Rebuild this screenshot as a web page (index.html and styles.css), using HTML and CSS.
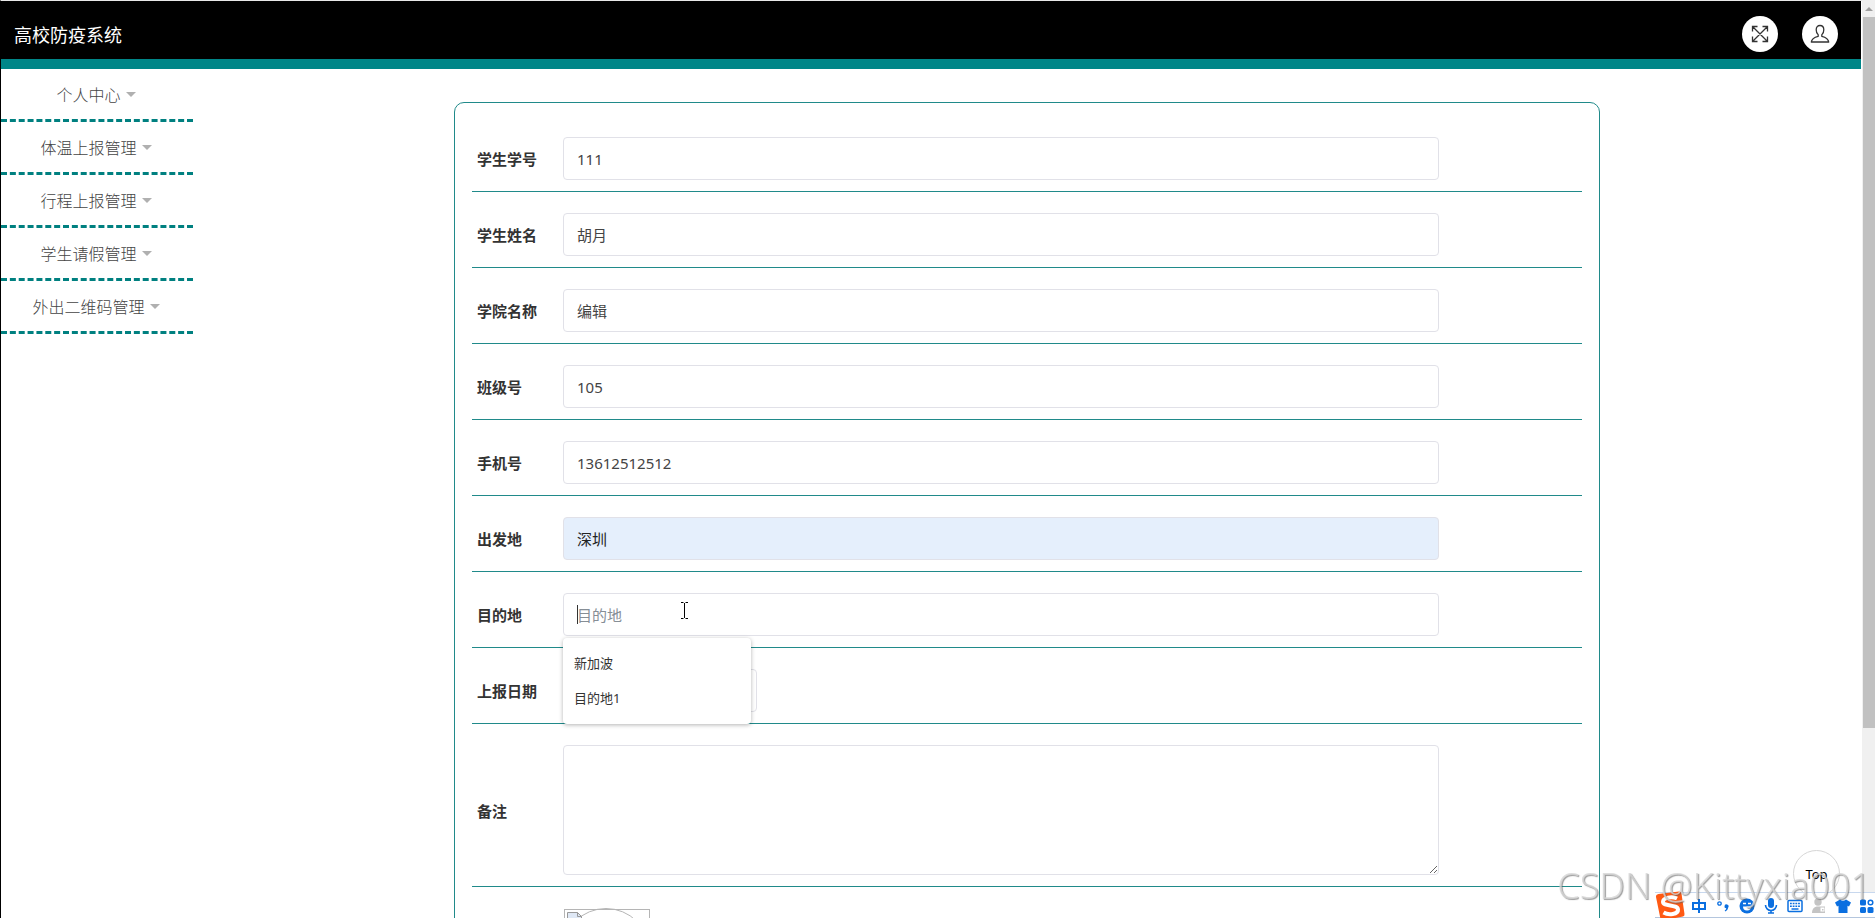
FILE: index.html
```html
<!DOCTYPE html>
<html lang="zh-CN">
<head>
    <meta charset="UTF-8">
    <meta name="viewport" content="width=device-width, initial-scale=1.0">
    <title>高校防疫系统</title>
    <link rel="stylesheet" href="styles.css">
</head>
<body>
    <div class="page">
        <header class="header">
            <h1 class="logo">高校防疫系统</h1>
            <div class="header-tools">
                <button class="round-btn" type="button" aria-label="全屏">
                    <svg width="20" height="20" viewBox="0 0 20 20" fill="none" stroke="#333" stroke-width="1.3">
                        <path d="M2.5 2.5l15 15M17.5 2.5l-15 15M2.5 7.5v-5h5M12.5 2.5h5v5M17.5 12.5v5h-5M7.5 17.5h-5v-5"/>
                    </svg>
                </button>
                <button class="round-btn" type="button" aria-label="用户">
                    <svg width="20" height="20" viewBox="0 0 20 20" fill="none" stroke="#333" stroke-width="1.3" stroke-linejoin="round">
                        <path d="M8.2 10.8C6.800 9.800 6.200 8 6.200 5.800C6.200 3.200 7.600 1.500 10 1.500S13.800 3.200 13.800 5.800C13.800 8 13.200 9.800 11.800 10.800V12.300C15.500 13.200 18.300 14.300 18.700 18H1.300C1.700 14.300 4.500 13.200 8.200 12.300Z"/>
                    </svg>
                </button>
            </div>
        </header>

        <div class="container">
            <nav class="sidebar">
                <ul class="menu">
                    <li><a class="menu-link" href="#">个人中心</a></li>
                    <li><a class="menu-link" href="#">体温上报管理</a></li>
                    <li><a class="menu-link" href="#">行程上报管理</a></li>
                    <li><a class="menu-link" href="#">学生请假管理</a></li>
                    <li><a class="menu-link" href="#">外出二维码管理</a></li>
                </ul>
            </nav>

            <main class="content">
                <form class="form-card" autocomplete="off">
                    <div class="form-row">
                        <label for="xuehao">学生学号</label>
                        <div class="field"><input class="form-control" type="text" id="xuehao" value="111"></div>
                    </div>
                    <div class="form-row">
                        <label for="xingming">学生姓名</label>
                        <div class="field"><input class="form-control" type="text" id="xingming" value="胡月"></div>
                    </div>
                    <div class="form-row">
                        <label for="xueyuan">学院名称</label>
                        <div class="field"><input class="form-control" type="text" id="xueyuan" value="编辑"></div>
                    </div>
                    <div class="form-row">
                        <label for="banji">班级号</label>
                        <div class="field"><input class="form-control" type="text" id="banji" value="105"></div>
                    </div>
                    <div class="form-row">
                        <label for="shouji">手机号</label>
                        <div class="field"><input class="form-control" type="text" id="shouji" value="13612512512"></div>
                    </div>
                    <div class="form-row">
                        <label for="chufadi">出发地</label>
                        <div class="field"><input class="form-control filled" type="text" id="chufadi" value="深圳"></div>
                    </div>
                    <div class="form-row">
                        <label for="mudidi">目的地</label>
                        <div class="field">
                            <input class="form-control" type="text" id="mudidi" placeholder="目的地">
                            <span class="caret"></span>
                            <ul class="suggest">
                                <li>新加波</li>
                                <li>目的地1</li>
                            </ul>
                        </div>
                    </div>
                    <div class="form-row">
                        <label for="riqi">上报日期</label>
                        <div class="field"><input class="form-control date" type="text" id="riqi"></div>
                    </div>
                    <div class="form-row">
                        <label for="beizhu">备注</label>
                        <div class="field"><textarea class="form-control" id="beizhu"></textarea></div>
                    </div>
                    <div class="form-row">
                        <div class="field upload">
                            <svg width="88" height="88" viewBox="0 0 88 88" fill="none" stroke="#b5b5b5">
                                <rect x="1.500" y="1.500" width="85" height="85"/>
                                <circle cx="43" cy="44" r="43.500"/>
                                <path d="M4.500 4.500h10l4 4v11h-14z" fill="#dfe8f5" stroke="#999"/>
                                <path d="M14.500 4.500v4h4" stroke="#999"/>
                            </svg>
                        </div>
                    </div>
                </form>
            </main>
        </div>
    </div>

    <div class="scrollbar"><div class="scroll-thumb"></div></div>

    <button class="top-btn" type="button">Top</button>

    <svg class="cursor" width="9" height="17" viewBox="0 0 9 17" fill="none" stroke="#000">
        <path d="M1 .5h2.500M5.500 .5H8M1 16.500h2.500M5.500 16.500H8M4.500 1v15"/>
    </svg>

    <!-- input method bar -->
    <div class="ime">
        <svg class="ime-logo" width="30" height="30" viewBox="0 0 30 30">
            <path d="M3.500 3L24 .5Q26 .3 26.400 2L29.500 23Q29.700 25 28 25.500L8 29.500Q6 30 5.500 28L1 6Q.7 3.500 3.500 3Z" fill="#ff5a14"/>
            <path d="M22 7.500C17 5 8 6.500 8 10.800C8 16 22.500 13 23 18.500C23.300 23.500 13.500 24.500 8.500 21.500" fill="none" stroke="#fff" stroke-width="4"/>
        </svg>
        <svg width="16" height="16" viewBox="0 0 16 16" fill="none" stroke="#0b6fe0" stroke-width="2">
            <path d="M2 5h12v6H2zM8 1v14"/>
        </svg>
        <svg width="16" height="16" viewBox="0 0 16 16">
            <circle cx="4.500" cy="5.500" r="1.700" fill="none" stroke="#0b6fe0" stroke-width="1.300"/>
            <path d="M9.500 8.200a2 2 0 1 1 3.700 1.200c-.3 2-1.300 3.300-3 4l-.5-1c1-.6 1.500-1.300 1.500-2.200a1.700 1.700 0 0 1-1.700-2z" fill="#0b6fe0"/>
        </svg>
        <svg width="16" height="16" viewBox="0 0 16 16">
            <circle cx="8" cy="8" r="7.500" fill="#0b6fe0"/>
            <path d="M4 8.500h8a4 4 0 0 1-8 0z" fill="#fff"/>
            <path d="M4 5.500h3M9 5.500h3" stroke="#fff" stroke-width="1.500"/>
        </svg>
        <svg width="16" height="16" viewBox="0 0 16 16" fill="none" stroke="#0b6fe0" stroke-width="1.600">
            <rect x="5" y="0" width="6" height="10" rx="3" fill="#0b6fe0" stroke="none"/>
            <path d="M2.500 7a5.500 5.500 0 0 0 11 0M8 12.500V15M5 15h6"/>
        </svg>
        <svg width="16" height="16" viewBox="0 0 16 16" fill="none" stroke="#0b6fe0" stroke-width="1.500">
            <rect x="1" y="2.500" width="14" height="11" rx="1"/>
            <path d="M3 5.500h10M3 8.200h10" stroke-dasharray="1.800 .9"/>
            <path d="M4.500 11h7"/>
        </svg>
        <svg width="16" height="16" viewBox="0 0 16 16" fill="#c4c4c4">
            <circle cx="7" cy="4" r="3.700"/>
            <path d="M1 15c0-4 2-6.500 6-6.500h7V15z"/>
            <path d="M9.500 9.500h4v4h-4z" fill="#fff"/>
            <path d="M11 11h1.500v1.500H11z"/>
        </svg>
        <svg width="16" height="16" viewBox="0 0 16 16" fill="#0b6fe0">
            <path d="M5 1.500q3 2.500 6 0l5 3-2 4-1.500-.8V15h-9V7.700L2 8.500l-2-4z"/>
        </svg>
        <svg width="16" height="16" viewBox="0 0 16 16" fill="#0b6fe0">
            <rect x="1" y="1.500" width="6" height="6" rx="1.500"/>
            <rect x="1" y="9" width="6" height="6" rx="1.500"/>
            <rect x="8.500" y="9" width="6" height="6" rx="1.500"/>
            <circle cx="11.500" cy="4.500" r="2.300" fill="none" stroke="#0b6fe0" stroke-width="1.500"/>
        </svg>
    </div>

    <div class="watermark">CSDN @Kittyxia001</div>
</body>
</html>
```

FILE: styles.css
```css
* {
    box-sizing: border-box;
}

body {
    margin: 0;
    height: 100vh;
    overflow: hidden;
    font-family: "Noto Sans", "Noto Sans CJK SC", sans-serif;
    font-size: 15px;
    color: #333;
    background-color: #fff;
}

ul {
    list-style: none;
    margin: 0;
    padding: 0;
}

button {
    font-family: inherit;
    cursor: pointer;
}

.page {
    height: 100vh;
    overflow: hidden;
    padding-right: 14px;
    border-top: 1px solid #e8e8e8;
    border-left: 1px solid #000;
}

/* header */
.header {
    display: flex;
    align-items: center;
    justify-content: space-between;
    height: 68px;
    padding: 0 23px 0 14px;
    background-color: #000;
    border-bottom: 10px solid #008688;
    margin-left: -1px;
}

.logo {
    margin: 10px 0 0;
    font-size: 18px;
    line-height: 24px;
    font-weight: 400;
    color: #fff;
}

.header-tools {
    display: flex;
    gap: 24px;
    margin-top: 8px;
}

.round-btn {
    display: flex;
    align-items: center;
    justify-content: center;
    width: 36px;
    height: 36px;
    padding: 0;
    border: none;
    border-radius: 50%;
    background-color: #fff;
}

.container {
    display: flex;
    align-items: flex-start;
}

/* sidebar */
.sidebar {
    width: 192px;
    flex-shrink: 0;
}

.menu-link {
    display: flex;
    align-items: center;
    justify-content: center;
    gap: 5px;
    height: 53px;
    padding: 0 2px 0 0;
    border-bottom: 3px dashed #008080;
    font-size: 16px;
    font-weight: 300;
    color: #444;
    text-decoration: none;
}

.menu-link::after {
    content: "";
    border: 5px solid transparent;
    border-top-color: #b0b0b0;
    border-bottom: none;
}

/* form */
.content {
    flex: 1;
    padding: 33px 261px 0;
}

.form-card {
    padding: 13px 17px;
    border: 1px solid #208a8a;
    border-radius: 10px;
}

.form-row {
    display: flex;
    align-items: center;
    padding: 21px 143px 11px 5px;
    border-bottom: 1px solid #208a8a;
}

.form-row label {
    width: 86px;
    flex-shrink: 0;
    font-weight: 700;
}

.field {
    position: relative;
    display: flex;
    flex: 1;
}

.form-control {
    width: 100%;
    height: 43px;
    padding: 0 13px;
    border: 1px solid #e1e1e8;
    border-radius: 4px;
    font-family: inherit;
    font-size: 15px;
    line-height: 24px;
    color: #444;
    background-color: #fff;
    outline: none;
}

.form-control::placeholder {
    color: #868e96;
    opacity: 1;
}

.form-control.filled {
    background-color: #e5effc;
    color: #222;
}

.form-control.date {
    width: 194px;
}

textarea.form-control {
    height: 130px;
    resize: vertical;
}

.upload {
    margin-left: 86px;
}

.caret {
    position: absolute;
    left: 14px;
    top: 12px;
    width: 1px;
    height: 19px;
    background-color: #333;
}

.suggest {
    position: absolute;
    left: 0;
    top: 45px;
    z-index: 2;
    width: 188px;
    padding: 8px 0;
    border-radius: 4px;
    background-color: #fff;
    box-shadow: 0 1px 4px rgba(0, 0, 0, 0.3);
}

.suggest li {
    padding: 0 11px;
    font-size: 13px;
    line-height: 35px;
}

/* things that float over the page */
.scrollbar {
    position: fixed;
    top: 0;
    right: 0;
    bottom: 0;
    width: 13px;
    padding: 7px 0 0 1px;
    background-color: #f0f0f0;
}

.scrollbar::before {
    content: "";
    display: block;
    width: 0;
    margin: 0 auto 6px;
    border: 4px solid transparent;
    border-bottom-color: #a0a0a0;
    border-top: none;
}

.scroll-thumb {
    height: 78%;
    background-color: #c1c1c1;
}

.top-btn {
    position: fixed;
    right: 35px;
    bottom: 21px;
    width: 47px;
    height: 47px;
    padding: 0;
    border: 1px solid #d5d5d5;
    border-radius: 50%;
    background-color: #fff;
    font-size: 13px;
    color: #000;
}

.cursor {
    position: fixed;
    left: 680px;
    top: 602px;
    z-index: 3;
}

.ime {
    position: fixed;
    right: 0;
    bottom: 0;
    display: flex;
    align-items: center;
    gap: 8px;
    height: 26px;
    padding: 1px 0 0;
    border-top: 1px solid #c8d8ee;
    border-bottom: 1px solid #b4c6de;
    background-color: #fff;
}

.ime-logo {
    margin: -4px -2px -4px 0;
}

.watermark {
    position: fixed;
    right: 4px;
    bottom: 10px;
    font-size: 36px;
    font-weight: 300;
    line-height: 44px;
    color: rgba(215, 215, 215, 0.8);
    text-shadow: 1px 1px 1px rgba(90, 90, 90, 0.6);
    white-space: nowrap;
    pointer-events: none;
}
```
